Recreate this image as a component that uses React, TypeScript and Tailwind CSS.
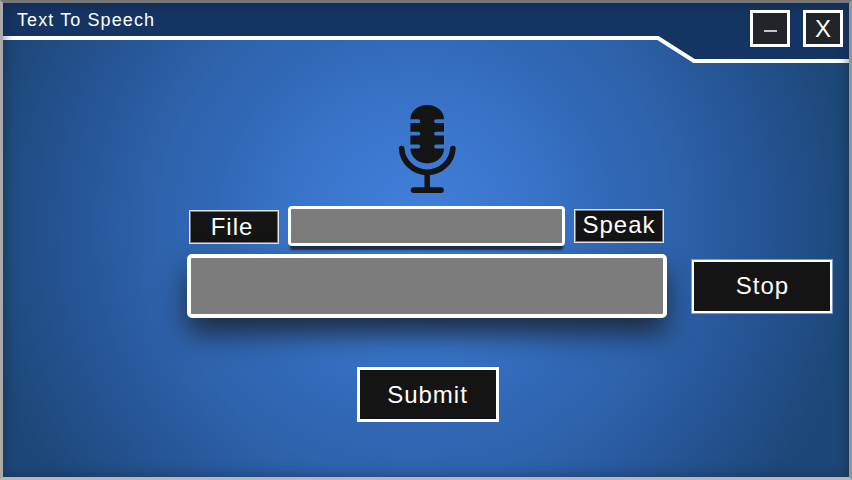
import React from "react";

function Microphone() {
  return (
    <svg width="58" height="90" viewBox="398 104 58 90" className="block" role="img" aria-label="Microphone">
      <path
        fill="#141414"
        d="M410.4 119.3A16.8 14.4 0 0 1 444 119.3H436a1.9 1.9 0 0 0 0 3.8H444V131.8H436a1.9 1.9 0 0 0 0 3.8H444V144.6H436a1.9 1.9 0 0 0 0 3.8H444A16.8 15 0 0 1 410.4 148.4H418.4a1.9 1.9 0 0 0 0-3.8H410.4V135.6H418.4a1.9 1.9 0 0 0 0-3.8H410.4V123.1H418.4a1.9 1.9 0 0 0 0-3.8Z"
      />
      <path d="M401.6 148.5A25.7 25.4 0 0 0 452.9 148.5" fill="none" stroke="#141414" strokeWidth="5.7" strokeLinecap="round" />
      <path d="M427.2 174V190" stroke="#141414" strokeWidth="5.5" />
      <path d="M413.6 190.1H441" stroke="#141414" strokeWidth="5.8" strokeLinecap="round" />
    </svg>
  );
}

function ActionButton({ className, children }: { className: string; children: React.ReactNode }) {
  return (
    <button className={`flex shrink-0 items-center justify-center bg-[#141414] text-[24px] leading-none tracking-[1px] text-white ${className}`}>
      {children}
    </button>
  );
}

export default function App() {
  return (
    <div className="relative h-[480px] w-[852px] overflow-hidden border-[3px] border-t-[#777777] border-r-[#999595] border-b-[#b9b6b9] border-l-[#aaaaaa] bg-[radial-gradient(circle_at_412px_222px,#4280db_0px,#3873c7_130px,#3168b6_200px,#2e63ad_255px,#265798_330px,#1c4777_445px)] font-['Liberation_Sans',Arial,sans-serif]">
      <header className="relative flex h-[60px] justify-between pl-[14px] pr-[6px]">
        <svg className="absolute left-0 top-0 block" width="846" height="60" viewBox="3 3 846 60" aria-hidden="true">
          <path d="M3 3H849V61H694L658 38H3Z" fill="#143463" />
          <path d="M3 38H658L694 61H849" fill="none" stroke="#fff" strokeWidth="4" />
        </svg>
        <h1 className="relative pt-[7px] text-[18px] leading-[20px] tracking-[1.1px] text-white">Text To Speech</h1>
        <div className="relative z-10 flex gap-[13px] pt-[7px]">
          <button aria-label="Minimize" className="flex h-[37px] w-10 items-center justify-center border-[3px] border-white bg-[#212429]">
            <span className="mt-[4px] h-[2px] w-[13px] bg-[#c5c5c5]" />
          </button>
          <button className="flex h-[37px] w-10 items-center justify-center border-[3px] border-white bg-[#212429] text-[24px] leading-none text-white">
            X
          </button>
        </div>
      </header>
      <main className="flex flex-col">
        <div className="mt-[41px] flex h-[90px] pl-[395px]">
          <Microphone />
        </div>
        <div className="mt-[12px] flex h-10 items-start pl-[186px]">
          <ActionButton className="mt-[4px] h-[34px] w-[90px] border border-[#e4e6ea] pr-[4px] shadow-[inset_0_0_0_1px_#77797c]">File</ActionButton>
          <input
            aria-label="File name"
            className="ml-[9px] h-10 w-[277px] rounded-[4px] border-[3px] border-white bg-[#7c7c7c] shadow-[0_6px_2px_-2px_#1c2e49] outline-none"
          />
          <ActionButton className="ml-[9px] mt-[3px] h-[34px] w-[90px] border border-[#e4e6ea] pb-[2px] shadow-[inset_0_0_0_1px_#77797c]">Speak</ActionButton>
        </div>
        <div className="mt-2 flex h-16 items-start pl-[184px]">
          <textarea
            aria-label="Text"
            className="h-16 w-[480px] shrink-0 resize-none rounded-[5px] border-4 border-white bg-[#7c7c7c] shadow-[0_16px_28px_0px_#1c2c40] outline-none"
          />
          <ActionButton className="ml-[25px] mt-[6px] h-[53px] w-[140px] border-2 border-white pb-[2px] pl-px shadow-[0_0_0_1px_#8299bb]">Stop</ActionButton>
        </div>
        <div className="mt-[49px] flex pl-[354px]">
          <ActionButton className="h-[55px] w-[142px] border-[3px] border-white pr-px">Submit</ActionButton>
        </div>
      </main>
      <div className="pointer-events-none absolute inset-0 shadow-[inset_0_0_12px_1px_rgba(20,35,55,0.5)]" />
    </div>
  );
}
